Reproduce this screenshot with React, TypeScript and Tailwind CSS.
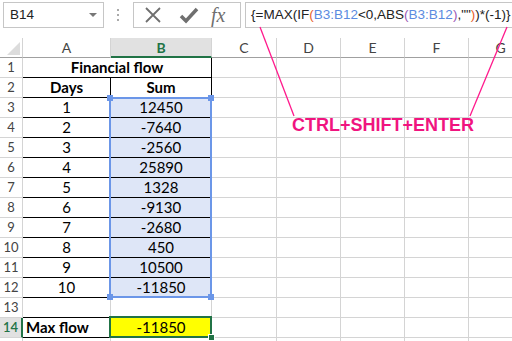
import { ReactNode } from 'react'

const GRID = 'border-r border-b border-[#d4d4d4]'
const widths = { A: 'w-[88px]', B: 'w-[101px]', C: 'w-[65px]', rest: 'w-[64px]' }

function RowHead({ n, active = false }: { n?: number; active?: boolean }) {
  return (
    <div
      className={`flex h-[20px] w-[23px] shrink-0 items-center justify-center border-b border-[#d4d4d4] text-[13px] ${
        active ? 'border-r-2 border-r-[#217346] bg-[#e1e1e1] font-semibold text-[#217346]' : 'border-r text-[#444]'
      }`}
    >
      {n}
    </div>
  )
}

function Empty({ w }: { w: string }) {
  return <div className={`h-[20px] shrink-0 ${w} ${GRID}`} />
}

function TailCells() {
  return (
    <>
      <Empty w={widths.C} />
      <Empty w={widths.rest} />
      <Empty w={widths.rest} />
      <Empty w={widths.rest} />
      <Empty w={widths.rest} />
    </>
  )
}

function Row({ children }: { children: ReactNode }) {
  return <div className="flex h-[20px]">{children}</div>
}

const data = [
  [1, 12450],
  [2, -7640],
  [3, -2560],
  [4, 25890],
  [5, 1328],
  [6, -9130],
  [7, -2680],
  [8, 450],
  [9, 10500],
  [10, -11850],
]

export default function App() {
  return (
    <div className="relative h-[341px] w-[512px] overflow-hidden bg-white font-['Lato','Liberation_Sans',sans-serif] text-black">
      {/* formula bar */}
      <div className="flex h-[38px] items-start pt-[2px] font-['Liberation_Sans',sans-serif]">
        <div className="ml-[3px] flex h-[26px] w-[101px] items-center justify-between border border-[#c6c6c6] pl-[6px] pr-[6px] text-[13.5px] text-[#222]">
          <span>B14</span>
          <span className="h-0 w-0 border-x-[4px] border-t-[4px] border-x-transparent border-t-[#777]" />
        </div>
        <div className="ml-[13px] mt-[7px] flex flex-col gap-[3px]">
          <span className="h-[2px] w-[2px] bg-[#aaa]" />
          <span className="h-[2px] w-[2px] bg-[#aaa]" />
          <span className="h-[2px] w-[2px] bg-[#aaa]" />
        </div>
        <div className="ml-[14px] flex h-[26px] w-[108px] items-center border border-[#c6c6c6] pl-[10px]">
          <svg width="18" height="18" viewBox="0 0 18 18" className="mr-[17px]">
            <path d="M2 2L16 16M16 2L2 16" stroke="#6f6f6f" strokeWidth="1.8" />
          </svg>
          <svg width="20" height="18" viewBox="0 0 20 18" className="mr-[12px]">
            <path d="M2 10L7 15L18 3" stroke="#6f6f6f" strokeWidth="3.5" fill="none" />
          </svg>
          <span className="font-['Liberation_Serif',serif] text-[20px] italic leading-none text-[#6f6f6f]">fx</span>
        </div>
        <div className="ml-[4px] flex h-[26px] flex-1 items-center whitespace-nowrap border border-r-0 border-[#c6c6c6] pl-[5px] text-[13.5px] text-[#222]">
          <span>{'{=MAX(IF'}</span>
          <span className="text-[#e8602c]">(</span>
          <span className="text-[#5b8be0]">B3:B12</span>
          <span>{'<0,ABS'}</span>
          <span className="text-[#9b59b6]">(</span>
          <span className="text-[#5b8be0]">B3:B12</span>
          <span className="text-[#9b59b6]">)</span>
          <span>{',""'}</span>
          <span className="text-[#e8602c]">)</span>
          <span>{')*(-1)}'}</span>
        </div>
      </div>

      {/* sheet */}
      <div className="relative text-[15px]">
        {/* column headers */}
        <div className="flex h-[20px] text-[14px] text-[#444]">
          <div className="relative h-[20px] w-[23px] shrink-0 border-r border-b border-r-[#d4d4d4] border-b-[#a0a0a0]">
            <span className="absolute bottom-[2px] right-[2px] h-0 w-0 border-b-[13px] border-l-[13px] border-b-[#dcdcdc] border-l-transparent" />
          </div>
          <div className={`flex h-[20px] shrink-0 items-center justify-center ${widths.A} border-r border-b border-r-[#d4d4d4] border-b-[#a0a0a0]`}>A</div>
          <div className={`flex h-[20px] shrink-0 items-center justify-center ${widths.B} border-r border-b-2 border-r-[#d4d4d4] border-b-[#217346] bg-[#e1e1e1] font-bold text-[#217346]`}>B</div>
          <div className={`flex h-[20px] shrink-0 items-center justify-center ${widths.C} border-r border-b border-r-[#d4d4d4] border-b-[#a0a0a0]`}>C</div>
          {['D', 'E', 'F', 'G'].map((c) => (
            <div key={c} className={`flex h-[20px] shrink-0 items-center justify-center ${widths.rest} border-r border-b border-r-[#d4d4d4] border-b-[#a0a0a0]`}>
              {c}
            </div>
          ))}
        </div>

        <Row>
          <RowHead n={1} />
          <div className="flex h-[20px] w-[189px] shrink-0 items-center justify-center border-r border-b border-black font-bold">Financial flow</div>
          <TailCells />
        </Row>
        <Row>
          <RowHead n={2} />
          <div className={`flex h-[20px] shrink-0 items-center justify-center ${widths.A} border-r border-b border-black font-bold`}>Days</div>
          <div className={`flex h-[20px] shrink-0 items-center justify-center ${widths.B} border-r border-b border-black font-bold`}>Sum</div>
          <TailCells />
        </Row>
        {data.map(([d, s], i) => (
          <Row key={d}>
            <RowHead n={i + 3} />
            <div className={`flex h-[20px] shrink-0 items-center justify-center ${widths.A} border-r border-b border-black`}>{d}</div>
            <div className={`flex h-[20px] shrink-0 items-center justify-center ${widths.B} border-r border-b border-black bg-[#dee6f7]`}>{s}</div>
            <TailCells />
          </Row>
        ))}
        <Row>
          <RowHead n={13} />
          <div className={`h-[20px] shrink-0 ${widths.A} border-r border-b border-r-[#d4d4d4] border-b-black`} />
          <Empty w={widths.B} />
          <TailCells />
        </Row>
        <Row>
          <RowHead n={14} active />
          <div className={`flex h-[20px] shrink-0 items-center ${widths.A} border-r border-b border-r-[#d4d4d4] border-b-black pl-[3px] font-bold`}>Max flow</div>
          <div className={`flex h-[20px] shrink-0 items-center justify-center ${widths.B} ${GRID} bg-[#ffff00]`}>-11850</div>
          <TailCells />
        </Row>
        <Row>
          <RowHead />
          <Empty w={widths.A} />
          <Empty w={widths.B} />
          <TailCells />
        </Row>

        {/* reference selection B3:B12 */}
        <div className="absolute left-[109px] top-[59px] h-[201px] w-[103px] border-2 border-[#6b96e8]">
          <span className="absolute -left-[4px] -top-[4px] h-[6px] w-[6px] bg-[#6b96e8]" />
          <span className="absolute -right-[4px] -top-[4px] h-[6px] w-[6px] bg-[#6b96e8]" />
          <span className="absolute -bottom-[4px] -left-[4px] h-[6px] w-[6px] bg-[#6b96e8]" />
          <span className="absolute -bottom-[4px] -right-[4px] h-[6px] w-[6px] bg-[#6b96e8]" />
        </div>
        {/* active cell B14 */}
        <div className="absolute left-[109px] top-[278px] h-[22px] w-[103px] border-2 border-[#217346]">
          <span className="absolute -bottom-[5px] -right-[5px] h-[7px] w-[7px] border border-white bg-[#217346]" />
        </div>
      </div>

      {/* annotation */}
      <svg className="pointer-events-none absolute left-0 top-0" width="512" height="341">
        <line x1="260" y1="27" x2="294" y2="116" stroke="#ff1a8c" strokeWidth="1.3" />
        <line x1="507" y1="27" x2="470" y2="116" stroke="#ff1a8c" strokeWidth="1.3" />
      </svg>
      <div className="absolute left-[292px] top-[114px] font-['Liberation_Sans',sans-serif] text-[18px] font-bold leading-[22px] text-[#f0147f]">
        CTRL+SHIFT+ENTER
      </div>
    </div>
  )
}
